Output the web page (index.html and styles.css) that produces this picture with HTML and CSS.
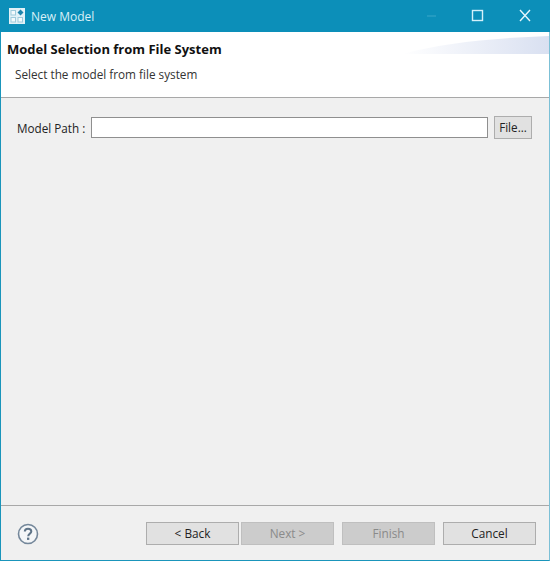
FILE: index.html
```html
<!DOCTYPE html>
<html lang="en">
<head>
    <meta charset="UTF-8">
    <title>New Model</title>
    <link rel="stylesheet" href="styles.css">
</head>
<body>
    <div class="window">
        <div class="titlebar">
            <svg class="app-icon" width="16" height="16" viewBox="0 0 16 16">
                <rect width="16" height="16" fill="#e2f1f7"/>
                <rect x="2" y="2.5" width="4.5" height="4.5" fill="#f4fafc" stroke="#9fcbdc"/>
                <rect x="2" y="9.5" width="4.5" height="4.5" fill="#f4fafc" stroke="#9fcbdc"/>
                <rect x="9" y="9.5" width="4.5" height="4.5" fill="#f4fafc" stroke="#9fcbdc"/>
                <path d="M11.5 1.5L14.5 4.5L11.5 7.5L8.5 4.5Z" fill="#1f84ab"/>
            </svg>
            <span class="title-text">New Model</span>
            <div class="window-controls">
                <svg class="control" width="46" height="32" viewBox="0 0 46 32"><path d="M17 16H26" stroke="#3ba7c9"/></svg>
                <svg class="control" width="46" height="32" viewBox="0 0 46 32"><rect x="16.5" y="10.5" width="10" height="10" fill="none" stroke="#d5f1fa" stroke-width="1.4"/></svg>
                <svg class="control" width="46" height="32" viewBox="0 0 46 32"><path d="M18 10L28 21M28 10L18 21" stroke="#e4f6fb" stroke-width="1.4"/></svg>
            </div>
        </div>

        <div class="banner">
            <svg class="swoosh" width="147" height="19" viewBox="0 0 147 19">
                <defs>
                    <linearGradient id="swooshFill" x1="0" x2="1" y1="0" y2="0">
                        <stop offset="0" stop-color="#ffffff"/>
                        <stop offset="1" stop-color="#d9e0f1"/>
                    </linearGradient>
                </defs>
                <path d="M0 19C40 8 90 3 147 1V19Z" fill="url(#swooshFill)"/>
            </svg>
            <h1 class="banner-title">Model Selection from File System</h1>
            <p class="banner-text">Select the model from file system</p>
        </div>

        <div class="content">
            <div class="form-row">
                <label class="field-label" for="modelPath">Model Path :</label>
                <input class="field-input" id="modelPath" type="text">
                <button class="file-button">File...</button>
            </div>
        </div>

        <div class="footer">
            <svg class="help-icon" width="22" height="22" viewBox="0 0 22 22">
                <circle cx="11" cy="11" r="9.5" fill="#f4f6f8" stroke="#74879a" stroke-width="1.6"/>
                <path d="M7.8 8.6C7.8 6.8 9.2 5.8 11 5.8C12.9 5.8 14.3 6.8 14.3 8.5C14.3 10.6 11.2 10.7 11.2 13.2" fill="none" stroke="#5f7488" stroke-width="2"/>
                <rect x="10" y="14.6" width="2.3" height="2.3" fill="#5f7488"/>
            </svg>
            <div class="footer-buttons">
                <button class="wizard-button">&lt; Back</button>
                <button class="wizard-button" disabled>Next &gt;</button>
                <button class="wizard-button finish" disabled>Finish</button>
                <button class="wizard-button cancel">Cancel</button>
            </div>
        </div>
    </div>
</body>
</html>
```

FILE: styles.css
```css
html, body {
    margin: 0;
    padding: 0;
}

body {
    font-family: 'Open Sans', 'Noto Sans', sans-serif;
    font-size: 12px;
    color: #222;
    background-color: #f0f0f0;
}

.window {
    display: flex;
    flex-direction: column;
    width: 550px;
    height: 561px;
    box-sizing: border-box;
    border: 1px solid #1a95bb;
    border-top: none;
    border-right-color: #7cc0d6;
    background-color: #f0f0f0;
}

.titlebar {
    display: flex;
    align-items: center;
    height: 32px;
    margin: 0 -1px;
    padding-left: 9px;
    background-color: #0c8fb9;
    flex-shrink: 0;
}

.app-icon {
    margin-right: 6px;
}

.title-text {
    color: #d9f0f7;
    font-size: 12px;
}

.window-controls {
    display: flex;
    margin-left: auto;
    margin-right: 2px;
}

.banner {
    position: relative;
    height: 66px;
    box-sizing: border-box;
    padding-top: 8px;
    background-color: #fff;
    border-bottom: 1px solid #a8a8a8;
    flex-shrink: 0;
}

.swoosh {
    position: absolute;
    top: 3px;
    right: 0;
}

.banner-title {
    margin: 0 0 0 6px;
    font-size: 13px;
    line-height: 18px;
    font-weight: 700;
    color: #111;
}

.banner-text {
    margin: 8px 0 0 14px;
    font-size: 11.75px;
    line-height: 16px;
    color: #333;
}

.content {
    flex: 1;
    padding: 18px 17px 0 16px;
}

.form-row {
    display: flex;
    align-items: center;
}

.field-label {
    font-size: 11.7px;
    margin-right: 6px;
    white-space: nowrap;
}

.field-input {
    flex: 1;
    min-width: 0;
    height: 21px;
    box-sizing: border-box;
    border: 1px solid #8f8f8f;
    background-color: #fff;
    padding: 0 3px;
}

.file-button {
    width: 38px;
    height: 23px;
    margin-left: 6px;
    padding: 0 0 1px;
    border: 1px solid #adadad;
    background-color: #e1e1e1;
    font-family: inherit;
    font-size: 11.7px;
    color: #222;
}

.footer {
    display: flex;
    align-items: flex-start;
    justify-content: space-between;
    height: 55px;
    box-sizing: border-box;
    padding: 16px 13px 0 16px;
    border-top: 1px solid #a8a8a8;
    flex-shrink: 0;
}

.help-icon {
    margin-top: 1px;
}

.footer-buttons {
    display: flex;
    gap: 2px;
}

.wizard-button {
    width: 93px;
    height: 23px;
    padding: 0 0 2px;
    border: 1px solid #adadad;
    background-color: #e1e1e1;
    font-family: inherit;
    font-size: 11.8px;
    color: #222;
}

.wizard-button:disabled {
    background-color: #cccccc;
    border-color: #bfbfbf;
    color: #8a8a8a;
}

.finish,
.cancel {
    margin-left: 6px;
}
```
